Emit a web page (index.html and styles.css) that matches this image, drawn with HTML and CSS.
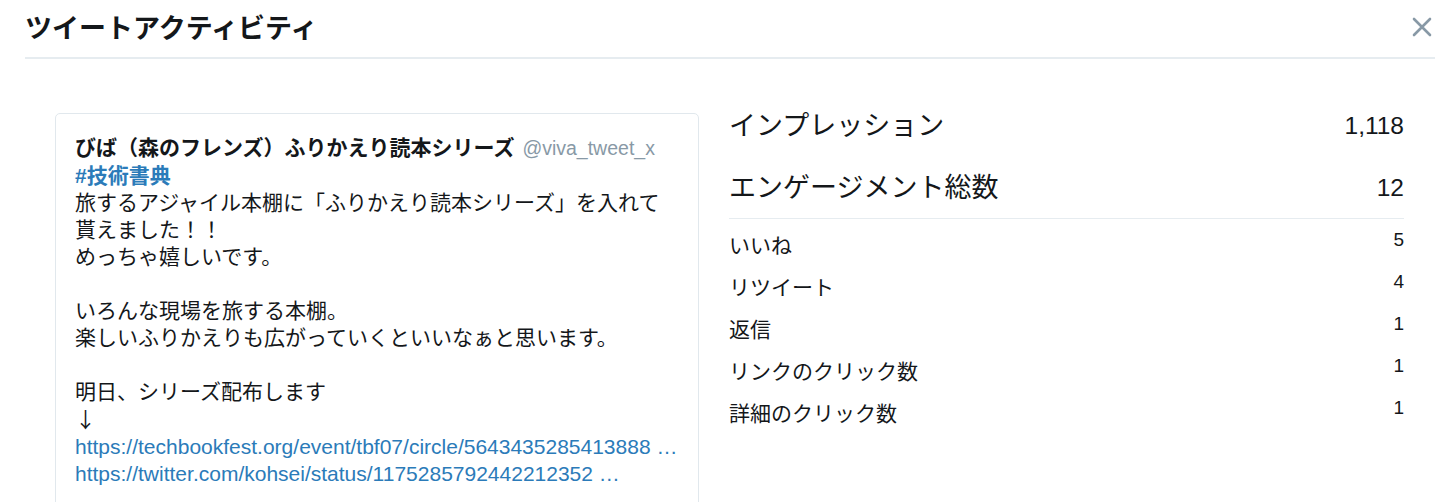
FILE: index.html
```html
<!DOCTYPE html>
<html lang="ja">
<head>
    <meta charset="UTF-8">
    <meta name="viewport" content="width=device-width, initial-scale=1.0">
    <title>ツイートアクティビティ</title>
    <link rel="stylesheet" href="styles.css">
</head>
<body>

    <div class="header">
        <div class="title">ツイートアクティビティ</div>
        <div class="close-btn">
            <svg width="20" height="20" viewBox="0 0 20 20">
                <path d="M2 2 L18 18 M18 2 L2 18" stroke="#8899a6" stroke-width="2.6" stroke-linecap="round"/>
            </svg>
        </div>
    </div>

    <div class="content">
        <div class="tweet">
            <div class="tweet-user">
                <span class="name">びば（森のフレンズ）ふりかえり読本シリーズ</span>
                <span class="screen-name">@viva_tweet_x</span>
            </div>
            <div class="tweet-text">
                <a class="hashtag">#技術書典</a><br>
                旅するアジャイル本棚に「ふりかえり読本シリーズ」を入れて貰えました！！<br>
                めっちゃ嬉しいです。<br>
                <br>
                いろんな現場を旅する本棚。<br>
                楽しいふりかえりも広がっていくといいなぁと思います。<br>
                <br>
                明日、シリーズ配布します<br>
                <span class="arrow">↓</span><br>
                <a class="link">https://techbookfest.org/event/tbf07/circle/5643435285413888 …</a><br>
                <a class="link">https://twitter.com/kohsei/status/1175285792442212352 …</a>
            </div>
        </div>

        <div class="stats">
            <div class="big-list">
                <div class="big-row">
                    <span>インプレッション</span>
                    <span class="big-num">1,118</span>
                </div>
                <div class="big-row">
                    <span>エンゲージメント総数</span>
                    <span class="big-num">12</span>
                </div>
            </div>
            <div class="small-list">
                <div class="small-row"><span class="label">いいね</span><span class="num">5</span></div>
                <div class="small-row"><span class="label">リツイート</span><span class="num">4</span></div>
                <div class="small-row"><span class="label">返信</span><span class="num">1</span></div>
                <div class="small-row"><span class="label">リンクのクリック数</span><span class="num">1</span></div>
                <div class="small-row"><span class="label">詳細のクリック数</span><span class="num">1</span></div>
            </div>
        </div>
    </div>

</body>
</html>
```

FILE: styles.css
```css
body {
    margin: 0;
    font-family: "Liberation Sans", "Noto Sans CJK JP", sans-serif;
    color: #14171a;
    background-color: #fff;
    overflow: hidden;
}
.header {
    display: flex;
    align-items: center;
    justify-content: space-between;
    height: 57px;
    margin: 0 10px 0 25px;
    border-bottom: 2px solid #e6ecf0;
}
.title {
    font-size: 27px;
    font-weight: bold;
    line-height: 30px;
}
.close-btn {
    width: 20px;
    height: 20px;
    margin-right: 3px;
    margin-top: -3px;
    cursor: pointer;
}
.content {
    display: flex;
    align-items: flex-start;
    gap: 30px;
    padding: 54px 41px 0 55px;
}
.tweet {
    width: 604px;
    flex-shrink: 0;
    padding: 20px 19px 20px 19px;
    border: 1px solid #e1e8ed;
    border-radius: 5px;
    font-size: 21px;
    line-height: 27px;
}
.name {
    font-weight: bold;
}
.screen-name {
    color: #8899a6;
    font-size: 19.5px;
    margin-left: 2px;
}
.hashtag {
    color: #2b7bb9;
    font-weight: bold;
}
.link {
    color: #2b7bb9;
}
.arrow {
    font-family: "Noto Sans CJK JP", sans-serif;
}
.stats {
    flex: 1;
}
.big-list {
    padding-bottom: 17px;
    border-bottom: 1px solid #e6ecf0;
}
.big-row {
    display: flex;
    justify-content: space-between;
    font-size: 27px;
    line-height: 26px;
}
.big-row + .big-row {
    margin-top: 36px;
}
.big-num {
    font-size: 24.5px;
}
.small-list {
    padding-top: 6px;
}
.small-row {
    display: flex;
    justify-content: space-between;
    align-items: flex-start;
}
.small-row .label {
    font-size: 21px;
    line-height: 42px;
}
.small-row .num {
    font-size: 19px;
    line-height: 30px;
}
```
